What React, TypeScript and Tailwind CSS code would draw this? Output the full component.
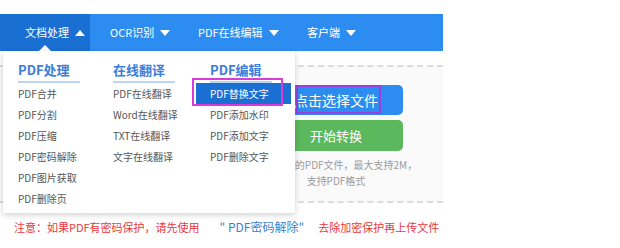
import React from 'react';

const font = { fontFamily: '"Noto Sans CJK SC", "Noto Sans", sans-serif' };

const navItems = [
  { label: '文档处理', up: true, cls: 'w-[90px] pl-[25px] bg-[#1a6fd2]' },
  { label: 'OCR识别', up: false, cls: 'w-[108px] pl-[20px]' },
  { label: 'PDF在线编辑', up: false, cls: 'w-[109px]' },
  { label: '客户端', up: false, cls: '' },
];

const columns = [
  {
    title: 'PDF处理',
    items: ['PDF合并', 'PDF分割', 'PDF压缩', 'PDF密码解除', 'PDF图片获取', 'PDF删除页'],
    cls: 'w-[95px]',
  },
  {
    title: '在线翻译',
    items: ['PDF在线翻译', 'Word在线翻译', 'TXT在线翻译', '文字在线翻译'],
    cls: 'w-[97px]',
  },
  {
    title: 'PDF编辑',
    items: ['PDF替换文字', 'PDF添加水印', 'PDF添加文字', 'PDF删除文字'],
    cls: 'flex-1',
  },
];

const Caret: React.FC<{ up: boolean }> = ({ up }) =>
  up ? (
    <span className="ml-[6px] inline-block w-0 h-0 border-x-[5px] border-x-transparent border-b-[6px] border-b-white" />
  ) : (
    <span className="ml-[6px] inline-block w-0 h-0 border-x-[5px] border-x-transparent border-t-[6px] border-t-white" />
  );

const App: React.FC = () => {
  return (
    <div className="w-[620px] h-[248px] bg-white overflow-hidden" style={font}>
      <div className="pt-[14px] w-[443px]">
        <nav className="h-[37px] flex bg-[#2d8cf0] text-white text-[11px]">
          {navItems.map((item, i) => (
            <div key={item.label} className={`relative flex items-center h-full ${item.cls}`}>
              <span>{item.label}</span>
              <Caret up={item.up} />
              {i === 0 && (
                <span className="absolute bottom-0 left-[39px] w-0 h-0 border-x-[6px] border-x-transparent border-b-[6px] border-b-white" />
              )}
            </div>
          ))}
        </nav>

        <div className="relative pt-[14px]">
          <div className="border-y-2 border-dashed border-[#dcdcdc] bg-[#fafafa] pt-[18px] pb-[12px] pl-[269px]">
            <div className="w-[134px] flex flex-col items-center">
              <div className="relative w-full h-[30px] rounded-[5px] bg-[#2d8cf0] text-white text-[14px] flex items-center justify-center">
                点击选择文件
                <span className="absolute left-[27px] top-0 w-[85px] h-[29px] border-2 border-[#9b3fe0]" />
              </div>
              <div className="mt-[5px] w-full h-[31px] rounded-[5px] bg-[#5cb85c] text-white text-[13px] flex items-center justify-center">
                开始转换
              </div>
              <div className="mt-[6px] text-[10px] leading-[16px] text-[#9a9a9a] whitespace-nowrap">
                需要转换的PDF文件，最大支持2M，
              </div>
              <div className="text-[10px] leading-[16px] text-[#9a9a9a] whitespace-nowrap">支持PDF格式</div>
            </div>
          </div>

          <div className="mt-[14px] flex items-center text-[11px] leading-[20px] pl-[14px] whitespace-nowrap">
            <span className="text-[#e8383d]">注意：如果PDF有密码保护，请先使用</span>
            <span className="ml-[20px] text-[12px] text-[#3c7fd0]">" PDF密码解除"</span>
            <span className="ml-[14px] text-[#e8383d]">去除加密保护再上传文件</span>
          </div>

          <div className="absolute top-0 left-[3px] w-[292px] h-[162px] bg-white shadow-[0_2px_6px_rgba(0,0,0,0.18)] flex pl-[15px] pt-[10px]">
            {columns.map((col) => (
              <div key={col.title} className={col.cls}>
                <div className="text-[13px] leading-[18px] font-bold text-[#3b7dd8]">{col.title}</div>
                <div className="mt-[2px] w-[62px] h-[2px] bg-[#bcd5f1]" />
                <ul className="text-[10px] leading-[21px] text-[#555]">
                  {col.items.map((it) =>
                    it === 'PDF替换文字' ? (
                      <li key={it} className="-ml-[14px] pl-[14px] mr-[4px] bg-[#1a6fd2] text-white">
                        {it}
                      </li>
                    ) : (
                      <li key={it}>{it}</li>
                    ),
                  )}
                </ul>
              </div>
            ))}
            <span className="absolute left-[189px] top-[27px] w-[91px] h-[28px] border-2 border-[#d93bd9]" />
          </div>
        </div>
      </div>
    </div>
  );
};

export default App;
